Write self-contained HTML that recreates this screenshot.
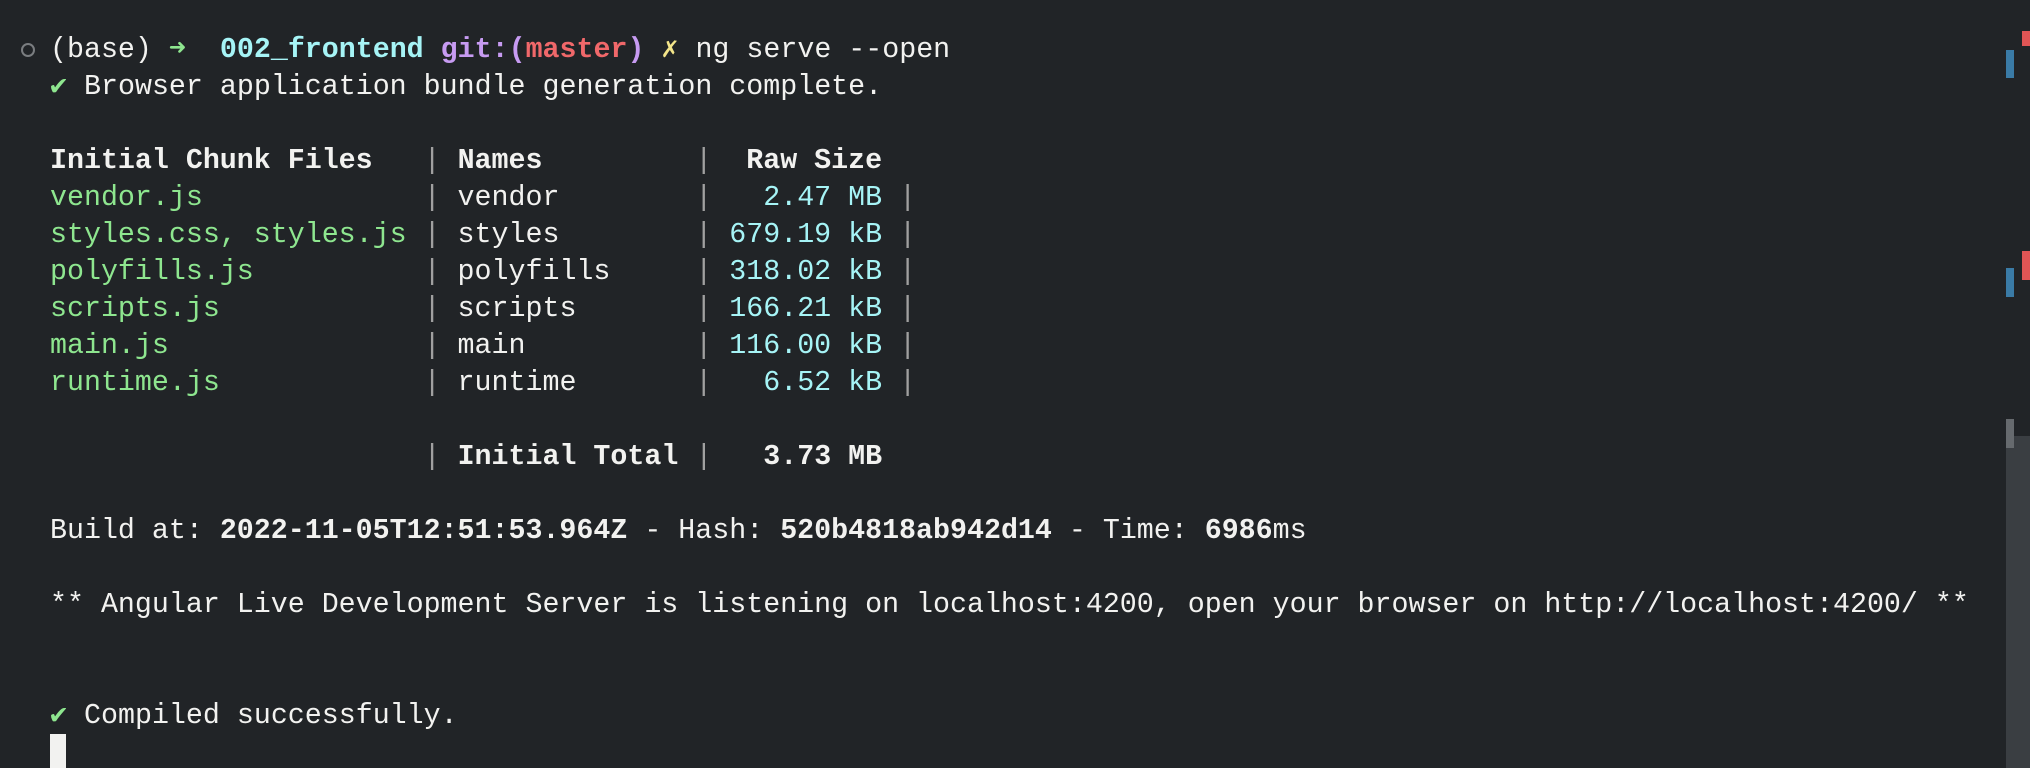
<!DOCTYPE html>
<html><head><style>
html,body{margin:0;padding:0;}
body{width:2030px;height:768px;background:#212427;overflow:hidden;position:relative;}
pre{position:absolute;left:50px;top:32px;margin:0;font-family:"Liberation Mono",monospace;font-size:28.3px;line-height:37px;color:#f2f2f0;}
b{font-weight:bold;}
.g{color:#8ee68f}.c{color:#a6f4f6}.p{color:#c79bf2}.r{color:#f0686a}.y{color:#f3e58a}.gr{color:#a0a0a0}.w{color:#fff}
.circ{position:absolute;left:21px;top:43px;width:10px;height:10px;border:2px solid #7a7d80;border-radius:50%;}
.bar{position:absolute;}
</style></head><body>
<div class="circ"></div>
<pre>(base) <span class="g">➜</span>  <b class="c">002_frontend</b> <b class="p">git:(</b><b class="r">master</b><b class="p">)</b> <span class="y">✗</span> ng serve --open
<span class="g">✔</span> Browser application bundle generation complete.

<b>Initial Chunk Files</b>   <span class="gr">|</span> <b>Names</b>         <span class="gr">|</span>  <b>Raw Size</b>
<span class="g">vendor.js</span>             <span class="gr">|</span> vendor        <span class="gr">|</span>   <span class="c">2.47 MB</span> <span class="gr">|</span>
<span class="g">styles.css, styles.js</span> <span class="gr">|</span> styles        <span class="gr">|</span> <span class="c">679.19 kB</span> <span class="gr">|</span>
<span class="g">polyfills.js</span>          <span class="gr">|</span> polyfills     <span class="gr">|</span> <span class="c">318.02 kB</span> <span class="gr">|</span>
<span class="g">scripts.js</span>            <span class="gr">|</span> scripts       <span class="gr">|</span> <span class="c">166.21 kB</span> <span class="gr">|</span>
<span class="g">main.js</span>               <span class="gr">|</span> main          <span class="gr">|</span> <span class="c">116.00 kB</span> <span class="gr">|</span>
<span class="g">runtime.js</span>            <span class="gr">|</span> runtime       <span class="gr">|</span>   <span class="c">6.52 kB</span> <span class="gr">|</span>

                      <span class="gr">|</span> <b>Initial Total</b> <span class="gr">|</span>   <b>3.73 MB</b>

Build at: <b>2022-11-05T12:51:53.964Z</b> - Hash: <b>520b4818ab942d14</b> - Time: <b>6986</b>ms

** Angular Live Development Server is listening on localhost:4200, open your browser on http://localhost:4200/ **


<span class="g">✔</span> Compiled successfully.
</pre>
<div class="bar" style="left:50px;top:734px;width:16px;height:34px;background:#f2f2f0"></div>
<div class="bar" style="left:2022px;top:31px;width:8px;height:15px;background:#e05555"></div>
<div class="bar" style="left:2006px;top:50px;width:8px;height:28px;background:#3a7ba6"></div>
<div class="bar" style="left:2022px;top:251px;width:8px;height:29px;background:#e05555"></div>
<div class="bar" style="left:2006px;top:268px;width:8px;height:29px;background:#3a7ba6"></div>
<div class="bar" style="left:2006px;top:436px;width:24px;height:332px;background:#3a3e42"></div>
<div class="bar" style="left:2006px;top:419px;width:8px;height:29px;background:#666a6e"></div>
</body></html>
